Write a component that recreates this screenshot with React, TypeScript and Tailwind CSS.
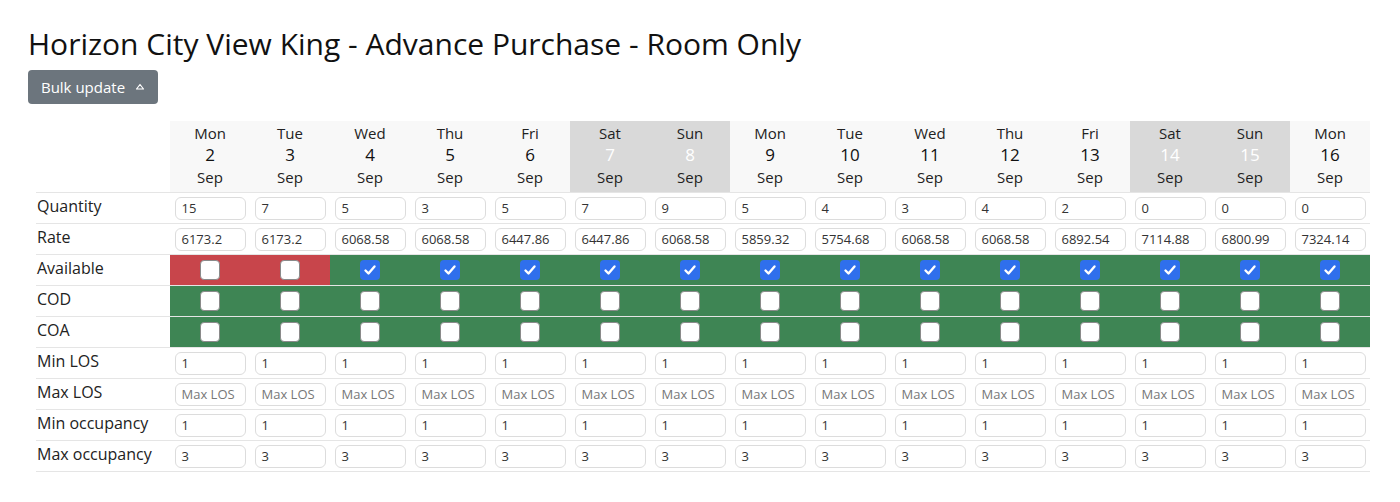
import React from "react";

const days = [
  ["Mon", 2], ["Tue", 3], ["Wed", 4], ["Thu", 5], ["Fri", 6], ["Sat", 7], ["Sun", 8], ["Mon", 9], ["Tue", 10], ["Wed", 11], ["Thu", 12], ["Fri", 13], ["Sat", 14], ["Sun", 15], ["Mon", 16],
] as const;
const qty = ["15", "7", "5", "3", "5", "7", "9", "5", "4", "3", "4", "2", "0", "0", "0"];
const rate = ["6173.2", "6173.2", "6068.58", "6068.58", "6447.86", "6447.86", "6068.58", "5859.32", "5754.68", "6068.58", "6068.58", "6892.54", "7114.88", "6800.99", "7324.14"];

function Check({ on }: { on: boolean }) {
  return on ? (
    <div className="w-[20px] h-[20px] rounded-[4px] bg-[#2f6fec] flex items-center justify-center">
      <svg width="14" height="14" viewBox="0 0 14 14"><path d="M2.5 7.5 L5.5 10.5 L11.5 3.5" stroke="white" strokeWidth="2.4" fill="none" strokeLinecap="round" strokeLinejoin="round" /></svg>
    </div>
  ) : (
    <div className="w-[20px] h-[20px] rounded-[4px] bg-white border border-[#8a8a8a]" />
  );
}

function InputRow({ label, vals, placeholder }: { label: string; vals?: string[]; placeholder?: string }) {
  return (
    <div className="flex h-[31px] border-t border-[#e5e5e5]">
      <div className="w-[134px] pl-[1px] text-[16px] leading-[26px] text-[#222]">{label}</div>
      {days.map((_, i) => (
        <div key={i} className="w-[80px] flex items-center justify-center">
          <div className={`w-[71px] h-[23px] rounded-[6px] border border-[#dcdcdc] bg-white px-[6px] text-[13px] leading-[21px] ${placeholder ? "text-[#777]" : "text-[#333]"}`}>
            {vals ? vals[i] : placeholder}
          </div>
        </div>
      ))}
    </div>
  );
}

function CheckRow({ label, red, checked }: { label: string; red: number; checked: (i: number) => boolean }) {
  return (
    <div className="flex h-[31px] border-t border-[#e5e5e5]">
      <div className="w-[134px] pl-[1px] text-[16px] leading-[26px] text-[#222]">{label}</div>
      {days.map((_, i) => (
        <div key={i} className={`w-[80px] flex items-center justify-center ${i < red ? "bg-[#c8454b]" : "bg-[#3e8554]"}`}>
          <Check on={checked(i)} />
        </div>
      ))}
    </div>
  );
}

export default function App() {
  return (
    <div className="w-[1400px] h-[502px] bg-white text-[#222]" style={{ fontFamily: '"Open Sans", sans-serif' }}>
      <div className="pl-[28px] pt-[24px]">
        <h1 className="text-[30px] leading-[40px] text-[#111]">Horizon City View King - Advance Purchase - Room Only</h1>
        <button className="mt-[6px] h-[34px] w-[130px] rounded-[4px] bg-[#6c757d] text-white text-[15px] flex items-center justify-center gap-[10px]">
          Bulk update
          <svg width="10" height="8" viewBox="0 0 10 8"><path d="M5 1.5 L8.5 6 L1.5 6 Z" fill="none" stroke="white" strokeWidth="1.2" strokeLinejoin="round" /></svg>
        </button>
      </div>
      <div className="ml-[36px] mt-[17px] w-[1334px]">
        <div className="flex h-[71px]">
          <div className="w-[134px]" />
          {days.map(([d, n], i) => {
            const we = d === "Sat" || d === "Sun";
            return (
              <div key={i} className={`w-[80px] flex flex-col items-center pt-[2px] ${we ? "bg-[#d9d9d9]" : "bg-[#f8f8f8]"}`}>
                <div className="text-[15px] leading-[20px]">{d}</div>
                <div className={`text-[17px] leading-[24px] ${we ? "text-white" : "text-[#111]"}`}>{n}</div>
                <div className="text-[15px] leading-[20px]">Sep</div>
              </div>
            );
          })}
        </div>
        <InputRow label="Quantity" vals={qty} />
        <InputRow label="Rate" vals={rate} />
        <CheckRow label="Available" red={2} checked={(i) => i >= 2} />
        <CheckRow label="COD" red={0} checked={() => false} />
        <CheckRow label="COA" red={0} checked={() => false} />
        <InputRow label="Min LOS" vals={Array(15).fill("1")} />
        <InputRow label="Max LOS" placeholder="Max LOS" />
        <InputRow label="Min occupancy" vals={Array(15).fill("1")} />
        <InputRow label="Max occupancy" vals={Array(15).fill("3")} />
        <div className="border-t border-[#e5e5e5]" />
      </div>
    </div>
  );
}
